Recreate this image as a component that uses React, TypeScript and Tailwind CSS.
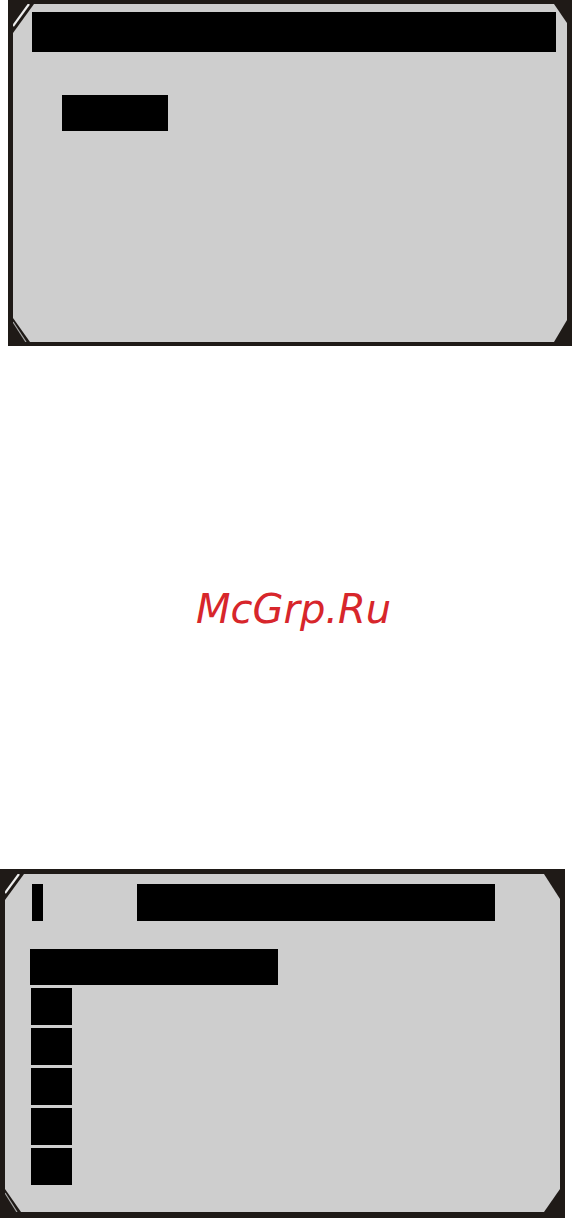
import React from "react";

const DARK = "#1f1a17";

function CornerTL({ w, h, stripe }: { w: number; h: number; stripe?: boolean }) {
  return (
    <svg className="absolute left-0 top-0" width={w} height={h} viewBox={`0 0 ${w} ${h}`}>
      <polygon points={`0,0 ${w},0 0,${h}`} fill={DARK} />
      {stripe && (
        <line x1={w - 5} y1={0} x2={0} y2={h - 7} stroke="#ededed" strokeWidth={2.2} />
      )}
    </svg>
  );
}

function CornerTR({ w, h }: { w: number; h: number }) {
  return (
    <svg className="absolute right-0 top-0" width={w} height={h} viewBox={`0 0 ${w} ${h}`}>
      <polygon points={`0,0 ${w},0 ${w},${h}`} fill={DARK} />
    </svg>
  );
}

function CornerBL({ w, h, stripe }: { w: number; h: number; stripe?: boolean }) {
  return (
    <svg className="absolute left-0 bottom-0" width={w} height={h} viewBox={`0 0 ${w} ${h}`}>
      <polygon points={`0,0 0,${h} ${w},${h}`} fill={DARK} />
      {stripe && (
        <line x1={0} y1={4} x2={w - 4} y2={h} stroke="#a9a9a9" strokeWidth={1.2} />
      )}
    </svg>
  );
}

function CornerBR({ w, h }: { w: number; h: number }) {
  return (
    <svg className="absolute right-0 bottom-0" width={w} height={h} viewBox={`0 0 ${w} ${h}`}>
      <polygon points={`${w},0 ${w},${h} 0,${h}`} fill={DARK} />
    </svg>
  );
}

export default function App() {
  return (
    <div className="w-[574px] h-[1218px] bg-white overflow-hidden">
      {/* Screen 1 */}
      <div className="relative ml-[8px] w-[564px] h-[346px] bg-[#cecece] border-l-[5px] border-t-[4px] border-r-[5px] border-b-[4px] border-[#1f1a17]">
        <CornerTL w={21} h={29} stripe />
        <CornerTR w={13} h={19} />
        <CornerBL w={17} h={24} stripe />
        <CornerBR w={13} h={22} />
        <div className="flex flex-col pt-[8px] pl-[19px] pr-[11px]">
          <div className="h-[40px] bg-black" />
          <div className="mt-[43px] ml-[30px] w-[106px] h-[36px] bg-black" />
        </div>
      </div>

      {/* Watermark */}
      <div className="h-[523px] pt-[243px] pl-[196px]">
        <span
          className="block text-[40px] leading-[40px] italic text-[#d7262b]"
          style={{ fontFamily: '"DejaVu Sans", Verdana, sans-serif' }}
        >
          McGrp.Ru
        </span>
      </div>

      {/* Screen 2 */}
      <div className="relative w-[565px] h-[349px] bg-[#cecece] border-l-[5px] border-t-[5px] border-r-[5px] border-b-[6px] border-[#1f1a17]">
        <CornerTL w={19} h={26} stripe />
        <CornerTR w={16} h={25} />
        <CornerBL w={16} h={23} stripe />
        <CornerBR w={16} h={23} />
        <div className="flex flex-col pt-[10px] pl-[25px]">
          <div className="flex">
            <div className="ml-[2px] w-[11px] h-[37px] bg-black" />
            <div className="ml-[94px] w-[358px] h-[37px] bg-black" />
          </div>
          <div className="mt-[28px] w-[248px] h-[36px] bg-black" />
          <div className="mt-[3px] ml-[1px] flex flex-col gap-[3px]">
            <div className="w-[41px] h-[37px] bg-black" />
            <div className="w-[41px] h-[37px] bg-black" />
            <div className="w-[41px] h-[37px] bg-black" />
            <div className="w-[41px] h-[37px] bg-black" />
            <div className="w-[41px] h-[37px] bg-black" />
          </div>
        </div>
      </div>
    </div>
  );
}
